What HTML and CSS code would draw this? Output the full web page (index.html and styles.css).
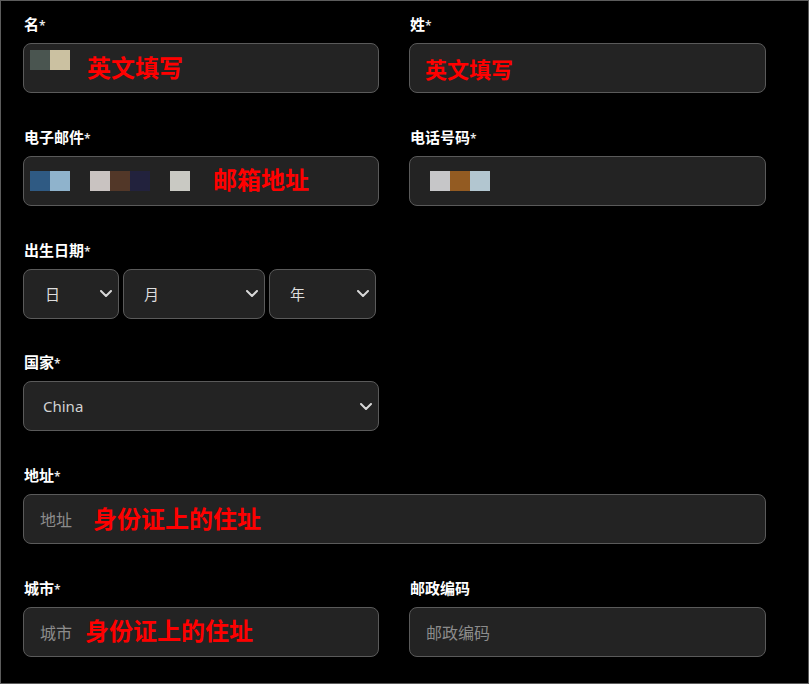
FILE: index.html
```html
<!doctype html>
<html>
  <head>
    <title>地址信息</title>
    <link rel="stylesheet" href="styles.css">
  </head>
  <body>
    <div class="frame">
      <div class="form">
        <div class="field">
          <div class="label">名<span class="req">*</span></div>
          <div class="input">
            <div class="mosaic top">
              <span style="background:#4a5550"></span><span style="background:#cbc1a1"></span>
            </div>
            <span class="note note-name">英文填写</span>
          </div>
        </div>
        <div class="field">
          <div class="label">姓<span class="req">*</span></div>
          <div class="input">
            <div class="mosaic top ghost">
              <span style="background:#2a2424"></span>
            </div>
            <span class="note note-last">英文填写</span>
          </div>
        </div>

        <div class="field">
          <div class="label">电子邮件<span class="req">*</span></div>
          <div class="input">
            <div class="mosaic">
              <span style="background:#2f5a83"></span><span style="background:#8fb3cc"></span><span></span><span style="background:#c9c3c1"></span><span style="background:#523728"></span><span style="background:#22223d"></span><span></span><span style="background:#c9c9c3"></span>
            </div>
            <span class="note note-mail">邮箱地址</span>
          </div>
        </div>
        <div class="field">
          <div class="label">电话号码<span class="req">*</span></div>
          <div class="input">
            <div class="mosaic phone">
              <span style="background:#c6c6c8"></span><span style="background:#935b22"></span><span style="background:#b2c6d0"></span>
            </div>
          </div>
        </div>

        <div class="field">
          <div class="label">出生日期<span class="req">*</span></div>
          <div class="date-row">
            <div class="select day"><span>日</span><svg class="chevron" viewBox="0 0 12 7"><path d="M1 1l5 5 5-5"/></svg></div>
            <div class="select month"><span>月</span><svg class="chevron" viewBox="0 0 12 7"><path d="M1 1l5 5 5-5"/></svg></div>
            <div class="select year"><span>年</span><svg class="chevron" viewBox="0 0 12 7"><path d="M1 1l5 5 5-5"/></svg></div>
          </div>
        </div>
        <div class="field"></div>

        <div class="field">
          <div class="label">国家<span class="req">*</span></div>
          <div class="select country"><span>China</span><svg class="chevron" viewBox="0 0 12 7"><path d="M1 1l5 5 5-5"/></svg></div>
        </div>
        <div class="field"></div>

        <div class="field wide">
          <div class="label">地址<span class="req">*</span></div>
          <div class="input">
            <span class="placeholder">地址</span>
            <span class="note note-addr">身份证上的住址</span>
          </div>
        </div>

        <div class="field">
          <div class="label">城市<span class="req">*</span></div>
          <div class="input">
            <span class="placeholder">城市</span>
            <span class="note note-city">身份证上的住址</span>
          </div>
        </div>
        <div class="field">
          <div class="label">邮政编码</div>
          <div class="input">
            <span class="placeholder">邮政编码</span>
          </div>
        </div>
      </div>
    </div>
  </body>
</html>
```

FILE: styles.css
```css
* {
  box-sizing: border-box;
  margin: 0;
  padding: 0;
}

html,
body {
  height: 100%;
  overflow: hidden;
  background: #000;
}

body {
  font-family: 'Noto Sans', 'Noto Sans CJK SC', sans-serif;
}

.frame {
  width: 809px;
  height: 684px;
  border: 1px solid #5c5c5c;
  background: #000;
  padding: 13px 0 0 22px;
}

.form {
  display: grid;
  grid-template-columns: 356px 357px;
  column-gap: 30px;
  row-gap: 33.8px;
}

.field {
  display: flex;
  flex-direction: column;
  min-height: 79px;
}
.field.wide {
  grid-column: 1 / 3;
}

.label {
  height: 20px;
  line-height: 20px;
  margin-bottom: 9px;
  padding-left: 1px;
  font-size: 15px;
  font-weight: 600;
  color: #fff;
}
.req {
  font-size: 12px;
  color: #e8e8e8;
}

.input,
.select {
  position: relative;
  display: flex;
  align-items: center;
  height: 50px;
  background: #232323;
  border: 1px solid #5a5a5a;
  border-radius: 8px;
  padding-left: 16px;
}

.placeholder {
  font-size: 16px;
  color: #8c8c8c;
  white-space: nowrap;
}

.note {
  font-family: 'Noto Sans CJK SC', sans-serif;
  font-size: 24px;
  font-weight: 700;
  color: #ff0000;
  white-space: nowrap;
  margin-bottom: 4px;
}
.note-name {
  margin-left: 17px;
}
.note-last {
  position: absolute;
  left: 15px;
  top: 8px;
  font-size: 22px;
}
.note-mail {
  margin-left: 23px;
}
.note-addr {
  margin-left: 21px;
}
.note-city {
  margin-left: 13px;
}

.mosaic {
  display: flex;
  margin-left: -10px;
}
.mosaic span {
  width: 20px;
  height: 20px;
}
.mosaic.top {
  align-self: flex-start;
  margin-top: 6px;
}
.mosaic.ghost {
  margin-left: 4px;
}
.mosaic.phone {
  margin-left: 4px;
}

.date-row {
  display: flex;
  gap: 4px;
}

.select {
  justify-content: space-between;
  padding: 0 6px 0 20px;
  font-size: 15px;
  color: #ddd;
}
.select.day {
  width: 96px;
  padding-left: 21px;
}
.select.month {
  width: 142px;
}
.select.year {
  width: 107px;
}
.select.country {
  padding-left: 19px;
  color: #d2d2d2;
}

.chevron {
  width: 12px;
  height: 7px;
  fill: none;
  stroke: #d8d8d8;
  stroke-width: 2;
  stroke-linecap: round;
  stroke-linejoin: round;
}
```
